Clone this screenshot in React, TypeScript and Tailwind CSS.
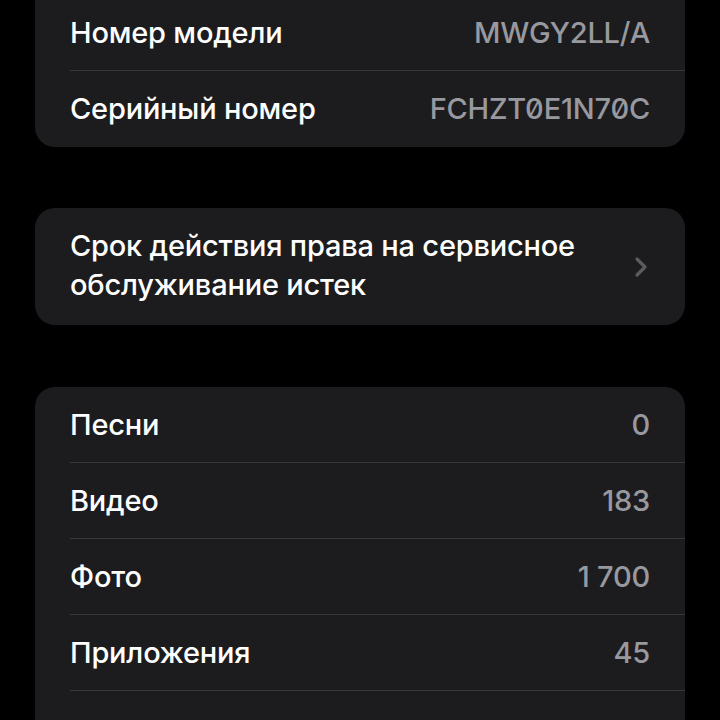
import React from 'react';

const font = { fontFamily: 'Inter, "Noto Sans", sans-serif' };

function Row({ label, value, last, mono }: { label?: string; value?: string; last?: boolean; mono?: boolean }) {
    return (
        <div className="pl-[35px]">
            <div className={`h-[76px] flex items-center justify-between pr-[35px] ${last ? '' : 'border-b border-[#38383a]'}`}>
                <span className="text-white">{label}</span>
                <span className={`text-[#98989f] ${mono ? 'slashed-zero' : ''}`}>{value}</span>
            </div>
        </div>
    );
}

export default function App() {
    return (
        <div className="w-[720px] h-[720px] overflow-hidden bg-black px-[35px] text-[29px] font-medium tracking-[-0.2px]" style={font}>
            {/* Device info */}
            <div className="-mt-[5px] bg-[#1c1c1e] rounded-b-[20px]">
                <Row label="Номер модели" value="MWGY2LL/A" />
                <Row label="Серийный номер" value="FCHZT0E1N70C" mono last />
            </div>

            {/* Coverage */}
            <div className="mt-[61px] bg-[#1c1c1e] rounded-[20px] h-[117px] pl-[35px] pr-[37px] flex items-center justify-between">
                <div className="text-white leading-[39px] -mt-[3px]">
                    Срок действия права на сервисное<br />обслуживание истек
                </div>
                <svg width="14" height="22" viewBox="0 0 14 22" fill="none">
                    <path d="M3 3l8 8-8 8" stroke="#5b5b60" strokeWidth="3.2" strokeLinecap="round" strokeLinejoin="round" />
                </svg>
            </div>

            {/* Counts */}
            <div className="mt-[62px] bg-[#1c1c1e] rounded-t-[20px]">
                <Row label="Песни" value="0" />
                <Row label="Видео" value="183" />
                <Row label="Фото" value="1 700" />
                <Row label="Приложения" value="45" />
                <Row last />
            </div>
        </div>
    );
}
